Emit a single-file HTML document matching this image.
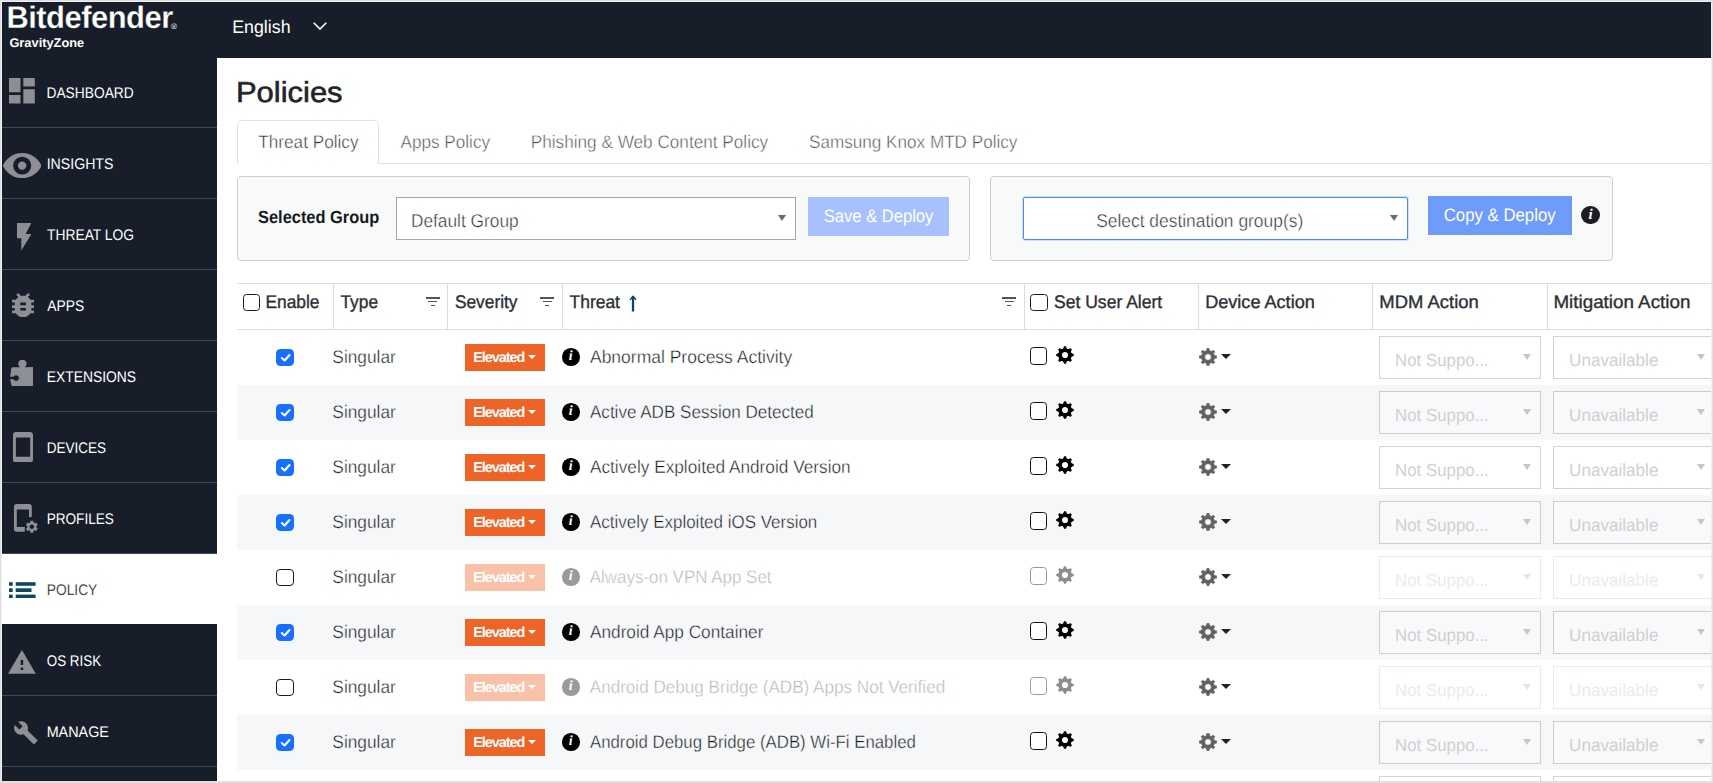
<!DOCTYPE html>
<html lang="en"><head><meta charset="utf-8"><title>Policies</title>
<style>
*{box-sizing:border-box;margin:0;padding:0}
html,body{width:1713px;height:783px;overflow:hidden;background:#fff}
body{font-family:"Liberation Sans",sans-serif;font-size:17.6px;color:#212529;position:relative;text-rendering:geometricPrecision}
.abs,.page *{position:absolute}
.page{position:absolute;left:0;top:0;width:1713px;height:783px;overflow:hidden}
.t{white-space:nowrap;display:inline-block;transform-origin:0 50%;line-height:20px}
/* frame */
.frame{position:absolute;left:0;top:0;width:1713px;height:783px;border:1px solid #e0e0e0;border-bottom-width:2px;pointer-events:none;box-shadow:inset 1px 1px 0 #efefef,inset -1px 0 0 #efefef}
/* header */
.hdr{left:2px;top:2px;width:1709px;height:56px;background:#171e2a}
.side{left:2px;top:58px;width:215px;height:723px;background:#171e2a}
.logo{left:6px;top:-1.1px;-webkit-text-stroke:0.3px #171e2a;color:#fff;font-size:31.4px;font-weight:700;line-height:34px;letter-spacing:-0.5px}
.reg{left:169px;top:19.5px;color:#fff;font-size:8px;line-height:10px}
.gz{left:8px;top:32.5px;color:#fff;font-size:12.6px;font-weight:700;line-height:16px}
.lang{left:231px;top:13.5px;color:#fff;font-size:18.2px;line-height:22px}
.chev{left:311px;top:20px;width:14px;height:8px}
/* sidebar */
.nav{left:0;width:215px;height:71px;border-bottom:1px solid #3b4b5f}
.nav .t{left:45px;top:27px;color:#fff;font-size:15.4px;line-height:20px}
.nav.act{background:#fff;border-bottom:0}
.nav.act .t{color:#4a4a4a}
.nav svg{fill:#8e8f94}
/* main */
.h1{left:236px;top:76.2px;font-size:28.9px;line-height:34px;color:#212529;-webkit-text-stroke:0.6px #212529}
.tabline{left:237px;top:163px;width:1474px;height:1px;background:#dee2e6}
.tab1{left:237px;top:120px;width:142px;height:44px;border:1px solid #dee2e6;border-bottom:0;border-radius:5px 5px 0 0;background:#fff}
.tabt{top:131.5px;font-size:18.2px;color:#4d5258;-webkit-text-stroke:0.45px #fff}
.panel{top:176px;height:85px;border:1px solid #cfcfcf;border-radius:4px;background:#f8f9f9}
.selbox{background:#fff;border:1px solid #a6a6a6}
.arr{width:0;height:0;border-left:4.5px solid transparent;border-right:4.5px solid transparent;border-top:6px solid #6b6b6b}
.btn{color:#fff;text-align:center}
/* table */
.thl{height:1px;background:#dcdcdc;left:237px;width:1474px}
.vsep{top:284px;width:1px;height:45px;background:#dcdcdc}
.th{top:291.600px;font-size:18.300px;font-weight:400;-webkit-text-stroke:0.35px #2b2f33;color:#2b2f33}
.hcb{width:17.5px;height:17.5px;margin:-0.5px 0 0 -0.7px;border:1.5px solid #1c1c1c;border-radius:3.5px;background:#fff}
.filt{width:14px;height:9px}
.filt i{left:0;height:1.5px;background:#555}
.row{left:237px;width:1474px;height:55px;overflow:hidden}
.row.alt{background:#f6f7f9}
.cb{left:39px;top:19px;width:18px;height:17.4px;border:1.5px solid #1c1c1c;border-radius:4px;background:#fff}
.cb.on{background:#1670fd;border:0;top:18.8px;height:17.2px;border-radius:4.5px}
.cb svg{left:0;top:0;width:18px;height:17.2px}
.sing{left:96px;top:16.6px;font-size:18.2px;color:#14181c;-webkit-text-stroke:0.4px #fff}
.badge{left:228px;top:14px;width:80px;height:27px;background:#ee6326}
.bt{left:8.3px;top:4.8px;font-size:14.4px;font-weight:700;color:#fff;line-height:18px;white-space:nowrap;letter-spacing:-1.03px;display:inline-block}
.car{left:63.4px;top:11px;width:0;height:0;border-left:4.3px solid transparent;border-right:4.3px solid transparent;border-top:4.3px solid #fff}
.info{left:325px;top:18.2px;width:17.6px;height:17.6px;border-radius:50%;background:#000}
.ii{left:0;top:0;width:17.6px;text-align:center;color:#fff;font-family:"Liberation Serif",serif;font-style:italic;font-weight:700;font-size:14px;line-height:17.6px}
.thr{left:353px;top:16.6px;font-size:18.2px;color:#14181c;-webkit-text-stroke:0.4px #fff}
.row.alt .sing,.row.alt .thr{-webkit-text-stroke-color:#f6f7f9}
.thin{-webkit-text-stroke:0.4px #fff}
.cb2{left:793px;top:17px;width:16.9px;height:17.7px;border:1.5px solid #111;border-radius:3.5px;background:#fff}
.g1{left:818.8px;top:15.9px;width:18px;height:18px;fill:#000;stroke:#000}
.g2{left:962px;top:17.8px;width:18px;height:18px;fill:#606060;stroke:#606060}
.car2{left:984px;top:23.5px;width:0;height:0;border-left:5px solid transparent;border-right:5px solid transparent;border-top:5px solid #222}
.sel{top:6px;height:43px;border:1px solid #d3d3d3;background:#fff}
.row.alt .sel{background:#f8f9fa;border-color:#cdcdcd}
.s1{left:1142px;width:162px}
.s2{left:1316px;width:170px}
.st{left:16px;top:12.7px;font-size:17.6px;line-height:20px;color:#d0d0d0;white-space:nowrap}
.sa{top:17px;width:0;height:0;border-left:4.5px solid transparent;border-right:4.5px solid transparent;border-top:6px solid #c6c6c6}
.s1 .sa{left:143px}
.s2 .sa{left:143px}
/* disabled rows */
.row.off .badge{background:#f8c1a8}
.row.off .info{background:#9a9a9a}
.row.off .thr{color:#b5b7ba}
.row.off .cb2{border-color:#9a9a9a}
.row.off .g1{fill:#8d8d8d;stroke:#8d8d8d}
.row.off .sel{border-color:#ebebeb}
.row.off .st{color:#ebebeb}
.row.off .sa{border-top-color:#e6e6e6}

</style></head>
<body>
<div class="page">
<div class="hdr">
  <span class="t logo" style="transform:translateX(-1.62px) scaleX(0.985)">Bitdefender</span><span class="t reg">&reg;</span>
  <span class="t gz" style="transform:translateX(-0.61px) scaleX(1.0186)">GravityZone</span>
  <span class="t lang" style="transform:translateX(-0.77px) scaleX(0.9772)">English</span>
  <svg class="chev" viewBox="0 0 14 8"><path d="M0.7 0.7L7 7L13.3 0.7" fill="none" stroke="#fff" stroke-width="1.6"/></svg>
</div>
<div class="side">
  <div class="nav" style="top:-1px"><svg style="left:7.2px;top:21.2px;width:25.8px;height:25.5px" viewBox="3 3 18 18" preserveAspectRatio="none"><path d="M3 13h8V3H3v10zm0 8h8v-6H3v6zm10 0h8V11h-8v10zm0-18v6h8V3h-8z"/></svg><span class="t" style="transform:translateX(-0.52px) scaleX(0.8953)">DASHBOARD</span></div>
  <div class="nav" style="top:70px"><svg style="left:0.9px;top:24.8px;width:38.3px;height:25.2px" viewBox="0 64 576 384" preserveAspectRatio="none"><path fill-rule="evenodd" d="M572.52 241.4C518.29 135.59 410.93 64 288 64S57.68 135.64 3.48 241.41a32.35 32.35 0 0 0 0 29.19C57.71 376.41 165.07 448 288 448s230.32-71.64 284.52-177.41a32.35 32.35 0 0 0 0-29.190zM288 392a136 136 0 1 1 0-272a136 136 0 1 1 0 272zM288 192a64 64 0 1 0 0 128a64 64 0 1 0 0-128z"/></svg><span class="t" style="transform:translateX(-0.35px) scaleX(0.9187)">INSIGHTS</span></div>
  <div class="nav" style="top:141px"><svg style="left:14.9px;top:24px;width:14.4px;height:27.6px" viewBox="7 2 10 20" preserveAspectRatio="none"><path d="M7 2v11h3v9l7-12h-4l4-8z"/></svg><span class="t" style="transform:translateX(0.08px) scaleX(0.8963)">THREAT LOG</span></div>
  <div class="nav" style="top:212px"><svg style="left:9.9px;top:22.8px;width:22.2px;height:24.4px" viewBox="4 3 16 18" preserveAspectRatio="none"><path d="M20 8h-2.810c-.45-.78-1.070-1.450-1.820-1.960L17 4.410 15.590 3l-2.170 2.170C12.960 5.060 12.490 5 12 5c-.49 0-.96.060-1.410.17L8.410 3 7 4.410l1.620 1.630C7.880 6.550 7.260 7.220 6.810 8H4v2h2.090c-.05.33-.09.66-.09 1v1H4v2h2v1c0 .34.040.67.090 1H4v2h2.810c1.040 1.790 2.970 3 5.190 3s4.150-1.210 5.190-3H20v-2h-2.090c.05-.33.090-.66.090-1v-1h2v-2h-2v-1c0-.34-.04-.67-.09-1H20V8zm-6 8h-4v-2h4v2zm0-4h-4v-2h4v2z"/></svg><span class="t" style="transform:translateX(0.3px) scaleX(0.8988)">APPS</span></div>
  <div class="nav" style="top:283px"><svg style="left:7.6px;top:19px;width:23.5px;height:26.4px" viewBox="0 0 23.5 26.4"><path d="M1.300 8.300Q1.400 7.300 2.500 7.250L10.100 7.150A4.150 4.150 0 1 1 14.700 7.150L22.900 7.100Q23.500 7.100 23.500 7.700V25.600Q23.500 26.400 22.700 26.400H3Q1.700 26.400 1.400 25.100L0.100 19.300H3.500A2.850 2.850 0 1 0 3.500 16.700H0.100Z"/></svg><span class="t" style="transform:translateX(-0.33px) scaleX(0.9008)">EXTENSIONS</span></div>
  <div class="nav" style="top:354px"><svg style="left:11px;top:20px;width:20px;height:30.4px" viewBox="5 1 14 22" preserveAspectRatio="none"><path d="M17 1.010L7 1c-1.100 0-2 .9-2 2v18c0 1.100.9 2 2 2h10c1.100 0 2-.9 2-2V3c0-1.100-.9-1.990-2-1.990zM17 19H7V5h10v14z"/></svg><span class="t" style="transform:translateX(-0.3px) scaleX(0.8776)">DEVICES</span></div>
  <div class="nav" style="top:425px"><svg style="left:12.2px;top:21.2px;width:26px;height:29px" viewBox="0 0 26 29"><path d="M2.600 0h12.600a2.600 2.600 0 0 1 2.600 2.600V13h-2.800V5.400H2.800V23h8v4.700H2.600A2.600 2.600 0 0 1 0 25.100V2.600A2.600 2.600 0 0 1 2.600 0z"/><g transform="translate(10.400 15.300) scale(0.62)"><path d="M19.140 12.940c.04-.3.060-.61.060-.94 0-.32-.02-.64-.07-.94l2.030-1.580a.49.490 0 0 0 .12-.61l-1.920-3.320a.488.488 0 0 0-.59-.22l-2.390.96c-.5-.38-1.030-.7-1.620-.94l-.36-2.540a.484.484 0 0 0-.48-.41h-3.840c-.24 0-.43.17-.47.41l-.36 2.540c-.59.24-1.130.57-1.620.94l-2.390-.96c-.22-.08-.47 0-.59.220L2.740 8.870c-.12.210-.08.470.12.610l2.030 1.580c-.05.3-.09.630-.09.940s.02.640.07.940l-2.030 1.580a.49.490 0 0 0-.12.610l1.920 3.320c.12.220.37.290.59.220l2.390-.96c.5.380 1.030.7 1.620.94l.36 2.540c.05.240.24.410.48.410h3.840c.24 0 .44-.17.47-.41l.36-2.540c.59-.24 1.130-.56 1.620-.94l2.390.96c.22.080.47 0 .59-.22l1.920-3.320c.12-.22.070-.47-.12-.61l-2.010-1.580zM12 15.600c-1.980 0-3.600-1.620-3.600-3.600s1.620-3.600 3.600-3.600 3.600 1.620 3.600 3.600-1.620 3.600-3.600 3.600z"/></g></svg><span class="t" style="transform:translateX(-0.3px) scaleX(0.8822)">PROFILES</span></div>
  <div class="nav act" style="top:496px;height:70px"><svg style="left:7.4px;top:27.700px;width:26.6px;height:16.4px;fill:#0a4862" viewBox="0 0 26.6 16.4"><rect x="0" y="0.200" width="3.700" height="3.600"/><rect x="6.700" y="0.200" width="19.900" height="3.600"/><rect x="0" y="6.300" width="3.700" height="3.700"/><rect x="6.700" y="6.300" width="15.800" height="3.700"/><rect x="0" y="12.600" width="3.700" height="3.600"/><rect x="6.700" y="12.600" width="19.900" height="3.600"/></svg><span class="t" style="transform:translateX(-0.22px) scaleX(0.895)">POLICY</span></div>
  <div class="nav" style="top:567px"><svg style="left:6.1px;top:25.200px;width:27.8px;height:23.8px" viewBox="1 2 22 19" preserveAspectRatio="none"><path d="M1 21h22L12 2 1 21zm12-3h-2v-2h2v2zm0-4h-2v-4h2v4z"/></svg><span class="t" style="transform:translateX(-0.25px) scaleX(0.8699)">OS RISK</span></div>
  <div class="nav" style="top:638px"><svg style="left:12.1px;top:24.800px;width:23.6px;height:23.2px" viewBox="0.900 0.900 22.100 22.200" preserveAspectRatio="none"><path d="M22.700 19l-9.100-9.100c.9-2.300.4-5-1.500-6.900-2-2-5-2.400-7.400-1.300L9 6 6 9 1.600 4.700C.4 7.100.9 10.100 2.900 12.100c1.900 1.900 4.600 2.400 6.900 1.500l9.100 9.100c.4.400 1 .4 1.400 0l2.300-2.300c.5-.4.5-1.100.1-1.400z"/></svg><span class="t" style="transform:translateX(-0.37px) scaleX(0.9338)">MANAGE</span></div>
  
</div>
<div class="main">
  <span class="t h1" style="transform:translateX(-0.04px) scaleX(1.0711)">Policies</span>
  <div class="tabline"></div>
  <div class="tab1"></div>
  <span class="t tabt" style="left:258px;color:#2e3338;transform:translateX(0.33px) scaleX(0.9435)">Threat Policy</span>
  <span class="t tabt" style="left:400px;transform:translateX(0.46px) scaleX(0.9429)">Apps Policy</span>
  <span class="t tabt" style="left:532px;transform:translateX(-1.25px) scaleX(0.9444)">Phishing &amp; Web Content Policy</span>
  <span class="t tabt" style="left:809px;transform:translateX(-0.04px) scaleX(0.9418)">Samsung Knox MTD Policy</span>

  <div class="panel" style="left:237px;width:733px"></div>
  <span class="t" style="left:257.500px;top:206.500px;font-weight:700;color:#16191c;font-size:17.6px;transform:translateX(0.03px) scaleX(0.9326)">Selected Group</span>
  <div class="selbox" style="left:396px;top:197px;width:400px;height:43px"></div>
  <span class="t thin" style="left:411.500px;top:210.700px;font-size:18.400px;color:#2d3136;transform:translateX(-1.05px) scaleX(0.9405)">Default Group</span>
  <i class="arr" style="left:777.500px;top:214.500px"></i>
  <div class="btn" style="left:808px;top:197px;width:141px;height:39px;background:#a6c1fc"></div>
  <span class="t" style="left:823.500px;top:206px;font-size:18px;color:#fff;transform:translateX(-0.19px) scaleX(0.9201)">Save &amp; Deploy</span>

  <div class="panel" style="left:990px;width:623px"></div>
  <div class="selbox" style="left:1022px;top:196px;width:387px;height:45px;border:2px solid #cfe0fb;border-radius:3px"></div>
  <div class="selbox" style="left:1023px;top:197px;width:385px;height:43px;border:1px solid #4d8bf0;border-radius:2px"></div>
  <span class="t thin" style="left:1097px;top:210.700px;font-size:18.400px;color:#2d3136;transform:translateX(-0.85px) scaleX(0.9464)">Select destination group(s)</span>
  <i class="arr" style="left:1389.500px;top:214.500px"></i>
  <div class="btn" style="left:1428px;top:196px;width:144px;height:39px;background:#6f9bfa"></div>
  <span class="t" style="left:1444px;top:205px;font-size:18px;color:#fff;transform:translateX(-0.3px) scaleX(0.9325)">Copy &amp; Deploy</span>
  <span class="info" style="left:1581.300px;top:205.800px;width:18.400px;height:18.400px;background:#1c1e22"><span class="ii" style="width:18.400px;line-height:18.400px;font-size:15px">i</span></span>

  <div class="thl" style="top:283px"></div>
  <div class="thl" style="top:329px"></div>
  <i class="vsep" style="left:333px"></i><i class="vsep" style="left:447px"></i><i class="vsep" style="left:562px"></i><i class="vsep" style="left:1024px"></i><i class="vsep" style="left:1198px"></i><i class="vsep" style="left:1372px"></i><i class="vsep" style="left:1547px"></i>
  <span class="hcb" style="left:243.500px;top:294px"></span>
  <span class="t th" style="left:265.500px;transform:translateX(-0.59px) scaleX(0.9491)">Enable</span>
  <span class="t th" style="left:340px;transform:translateX(0.46px) scaleX(0.9497)">Type</span>
  <span class="filt" style="left:425.500px;top:297px"><i style="top:0;width:14px"></i><i style="top:3.800px;left:2.500px;width:9px"></i><i style="top:7.600px;left:5px;width:4px"></i></span>
  <span class="t th" style="left:454.500px;transform:translateX(-0.07px) scaleX(0.9475)">Severity</span>
  <span class="filt" style="left:540px;top:297px"><i style="top:0;width:14px"></i><i style="top:3.800px;left:2.500px;width:9px"></i><i style="top:7.600px;left:5px;width:4px"></i></span>
  <span class="t th" style="left:569.500px;transform:translateX(-0.44px) scaleX(0.9536)">Threat</span>
  <svg style="left:628px;top:294px;width:10px;height:18px" viewBox="0 0 10 18"><path d="M5 2V17.500" fill="none" stroke="#0a4862" stroke-width="2.300"/><path d="M1.400 5.600L5 1.200L8.600 5.600L7.600 6.300L5 3.800L2.400 6.300Z" fill="#0a4862"/></svg>
  <span class="filt" style="left:1002px;top:297px"><i style="top:0;width:14px"></i><i style="top:3.800px;left:2.500px;width:9px"></i><i style="top:7.600px;left:5px;width:4px"></i></span>
  <span class="hcb" style="left:1031px;top:294px"></span>
  <span class="t th" style="left:1053.500px;transform:translateX(0.02px) scaleX(0.9591)">Set User Alert</span>
  <span class="t th" style="left:1205.500px;transform:translateX(-0.84px) scaleX(0.9899)">Device Action</span>
  <span class="t th" style="left:1379.500px;transform:translateX(-0.66px) scaleX(1.0088)">MDM Action</span>
  <span class="t th" style="left:1553.500px;transform:translateX(-0.59px) scaleX(1.029)">Mitigation Action</span>
<div class="rows">
<div class="row" style="top:330px"><span class="cb on"><svg viewBox="0 0 18 17.2"><path d="M5.800 9.000l2.800 2.500 4.900-5.500" fill="none" stroke="#fff" stroke-width="2.100" stroke-linecap="round" stroke-linejoin="round"/></svg></span><span class="t sing" style="transform:translateX(-0.65px) scaleX(0.9502)">Singular</span><span class="badge"><span class="bt">Elevated</span><i class="car"></i></span><span class="info"><span class="ii">i</span></span><span class="t thr" style="transform:translateX(-0.04px) scaleX(0.9616)">Abnormal Process Activity</span><span class="cb2"></span><svg class="g1" viewBox="-10 -10 20 20"><path fill-rule="evenodd" stroke-linejoin="round" stroke-width="1.2" d="M-1.66 -6.70L-0.58 -9.18L0.58 -9.18L1.66 -6.70L3.56 -5.91L6.08 -6.90L6.90 -6.08L5.91 -3.56L6.70 -1.66L9.18 -0.58L9.18 0.58L6.70 1.66L5.91 3.56L6.90 6.08L6.08 6.90L3.56 5.91L1.66 6.70L0.58 9.18L-0.58 9.18L-1.66 6.70L-3.56 5.91L-6.08 6.90L-6.90 6.08L-5.91 3.56L-6.70 1.66L-9.18 0.58L-9.18 -0.58L-6.70 -1.66L-5.91 -3.56L-6.90 -6.08L-6.08 -6.90L-3.56 -5.91ZM-4.00 0.00a4.0 4.0 0 1 0 8.0 0a4.0 4.0 0 1 0 -8.0 0Z"/></svg><svg class="g2" viewBox="-10 -10 20 20"><path fill-rule="evenodd" stroke-linejoin="round" stroke-width="0.8" d="M-1.42 -7.16L-1.26 -9.42L1.26 -9.42L1.42 -7.16L4.06 -6.07L5.76 -7.55L7.55 -5.76L6.07 -4.06L7.16 -1.42L9.42 -1.26L9.42 1.26L7.16 1.42L6.07 4.06L7.55 5.76L5.76 7.55L4.06 6.07L1.42 7.16L1.26 9.42L-1.26 9.42L-1.42 7.16L-4.06 6.07L-5.76 7.55L-7.55 5.76L-6.07 4.06L-7.16 1.42L-9.42 1.26L-9.42 -1.26L-7.16 -1.42L-6.07 -4.06L-7.55 -5.76L-5.76 -7.55L-4.06 -6.07ZM-3.70 0.00a3.7 3.7 0 1 0 7.4 0a3.7 3.7 0 1 0 -7.4 0Z"/></svg><i class="car2"></i><span class="sel s1"><span class="t st" style="transform:translateX(-0.94px) scaleX(0.9583)">Not Suppo...</span><i class="sa"></i></span><span class="sel s2"><span class="t st" style="transform:translateX(-0.96px) scaleX(0.9721)">Unavailable</span><i class="sa"></i></span></div>
<div class="row alt" style="top:385px"><span class="cb on"><svg viewBox="0 0 18 17.2"><path d="M5.800 9.000l2.800 2.500 4.900-5.500" fill="none" stroke="#fff" stroke-width="2.100" stroke-linecap="round" stroke-linejoin="round"/></svg></span><span class="t sing" style="transform:translateX(-0.65px) scaleX(0.9502)">Singular</span><span class="badge"><span class="bt">Elevated</span><i class="car"></i></span><span class="info"><span class="ii">i</span></span><span class="t thr" style="transform:translateX(-0.03px) scaleX(0.938)">Active ADB Session Detected</span><span class="cb2"></span><svg class="g1" viewBox="-10 -10 20 20"><path fill-rule="evenodd" stroke-linejoin="round" stroke-width="1.2" d="M-1.66 -6.70L-0.58 -9.18L0.58 -9.18L1.66 -6.70L3.56 -5.91L6.08 -6.90L6.90 -6.08L5.91 -3.56L6.70 -1.66L9.18 -0.58L9.18 0.58L6.70 1.66L5.91 3.56L6.90 6.08L6.08 6.90L3.56 5.91L1.66 6.70L0.58 9.18L-0.58 9.18L-1.66 6.70L-3.56 5.91L-6.08 6.90L-6.90 6.08L-5.91 3.56L-6.70 1.66L-9.18 0.58L-9.18 -0.58L-6.70 -1.66L-5.91 -3.56L-6.90 -6.08L-6.08 -6.90L-3.56 -5.91ZM-4.00 0.00a4.0 4.0 0 1 0 8.0 0a4.0 4.0 0 1 0 -8.0 0Z"/></svg><svg class="g2" viewBox="-10 -10 20 20"><path fill-rule="evenodd" stroke-linejoin="round" stroke-width="0.8" d="M-1.42 -7.16L-1.26 -9.42L1.26 -9.42L1.42 -7.16L4.06 -6.07L5.76 -7.55L7.55 -5.76L6.07 -4.06L7.16 -1.42L9.42 -1.26L9.42 1.26L7.16 1.42L6.07 4.06L7.55 5.76L5.76 7.55L4.06 6.07L1.42 7.16L1.26 9.42L-1.26 9.42L-1.42 7.16L-4.06 6.07L-5.76 7.55L-7.55 5.76L-6.07 4.06L-7.16 1.42L-9.42 1.26L-9.42 -1.26L-7.16 -1.42L-6.07 -4.06L-7.55 -5.76L-5.76 -7.55L-4.06 -6.07ZM-3.70 0.00a3.7 3.7 0 1 0 7.4 0a3.7 3.7 0 1 0 -7.4 0Z"/></svg><i class="car2"></i><span class="sel s1"><span class="t st" style="transform:translateX(-0.94px) scaleX(0.9583)">Not Suppo...</span><i class="sa"></i></span><span class="sel s2"><span class="t st" style="transform:translateX(-0.96px) scaleX(0.9721)">Unavailable</span><i class="sa"></i></span></div>
<div class="row" style="top:440px"><span class="cb on"><svg viewBox="0 0 18 17.2"><path d="M5.800 9.000l2.800 2.500 4.900-5.500" fill="none" stroke="#fff" stroke-width="2.100" stroke-linecap="round" stroke-linejoin="round"/></svg></span><span class="t sing" style="transform:translateX(-0.65px) scaleX(0.9502)">Singular</span><span class="badge"><span class="bt">Elevated</span><i class="car"></i></span><span class="info"><span class="ii">i</span></span><span class="t thr" style="transform:translateX(-0.04px) scaleX(0.9481)">Actively Exploited Android Version</span><span class="cb2"></span><svg class="g1" viewBox="-10 -10 20 20"><path fill-rule="evenodd" stroke-linejoin="round" stroke-width="1.2" d="M-1.66 -6.70L-0.58 -9.18L0.58 -9.18L1.66 -6.70L3.56 -5.91L6.08 -6.90L6.90 -6.08L5.91 -3.56L6.70 -1.66L9.18 -0.58L9.18 0.58L6.70 1.66L5.91 3.56L6.90 6.08L6.08 6.90L3.56 5.91L1.66 6.70L0.58 9.18L-0.58 9.18L-1.66 6.70L-3.56 5.91L-6.08 6.90L-6.90 6.08L-5.91 3.56L-6.70 1.66L-9.18 0.58L-9.18 -0.58L-6.70 -1.66L-5.91 -3.56L-6.90 -6.08L-6.08 -6.90L-3.56 -5.91ZM-4.00 0.00a4.0 4.0 0 1 0 8.0 0a4.0 4.0 0 1 0 -8.0 0Z"/></svg><svg class="g2" viewBox="-10 -10 20 20"><path fill-rule="evenodd" stroke-linejoin="round" stroke-width="0.8" d="M-1.42 -7.16L-1.26 -9.42L1.26 -9.42L1.42 -7.16L4.06 -6.07L5.76 -7.55L7.55 -5.76L6.07 -4.06L7.16 -1.42L9.42 -1.26L9.42 1.26L7.16 1.42L6.07 4.06L7.55 5.76L5.76 7.55L4.06 6.07L1.42 7.16L1.26 9.42L-1.26 9.42L-1.42 7.16L-4.06 6.07L-5.76 7.55L-7.55 5.76L-6.07 4.06L-7.16 1.42L-9.42 1.26L-9.42 -1.26L-7.16 -1.42L-6.07 -4.06L-7.55 -5.76L-5.76 -7.55L-4.06 -6.07ZM-3.70 0.00a3.7 3.7 0 1 0 7.4 0a3.7 3.7 0 1 0 -7.4 0Z"/></svg><i class="car2"></i><span class="sel s1"><span class="t st" style="transform:translateX(-0.94px) scaleX(0.9583)">Not Suppo...</span><i class="sa"></i></span><span class="sel s2"><span class="t st" style="transform:translateX(-0.96px) scaleX(0.9721)">Unavailable</span><i class="sa"></i></span></div>
<div class="row alt" style="top:495px"><span class="cb on"><svg viewBox="0 0 18 17.2"><path d="M5.800 9.000l2.800 2.500 4.900-5.500" fill="none" stroke="#fff" stroke-width="2.100" stroke-linecap="round" stroke-linejoin="round"/></svg></span><span class="t sing" style="transform:translateX(-0.65px) scaleX(0.9502)">Singular</span><span class="badge"><span class="bt">Elevated</span><i class="car"></i></span><span class="info"><span class="ii">i</span></span><span class="t thr" style="transform:translateX(-0.03px) scaleX(0.9331)">Actively Exploited iOS Version</span><span class="cb2"></span><svg class="g1" viewBox="-10 -10 20 20"><path fill-rule="evenodd" stroke-linejoin="round" stroke-width="1.2" d="M-1.66 -6.70L-0.58 -9.18L0.58 -9.18L1.66 -6.70L3.56 -5.91L6.08 -6.90L6.90 -6.08L5.91 -3.56L6.70 -1.66L9.18 -0.58L9.18 0.58L6.70 1.66L5.91 3.56L6.90 6.08L6.08 6.90L3.56 5.91L1.66 6.70L0.58 9.18L-0.58 9.18L-1.66 6.70L-3.56 5.91L-6.08 6.90L-6.90 6.08L-5.91 3.56L-6.70 1.66L-9.18 0.58L-9.18 -0.58L-6.70 -1.66L-5.91 -3.56L-6.90 -6.08L-6.08 -6.90L-3.56 -5.91ZM-4.00 0.00a4.0 4.0 0 1 0 8.0 0a4.0 4.0 0 1 0 -8.0 0Z"/></svg><svg class="g2" viewBox="-10 -10 20 20"><path fill-rule="evenodd" stroke-linejoin="round" stroke-width="0.8" d="M-1.42 -7.16L-1.26 -9.42L1.26 -9.42L1.42 -7.16L4.06 -6.07L5.76 -7.55L7.55 -5.76L6.07 -4.06L7.16 -1.42L9.42 -1.26L9.42 1.26L7.16 1.42L6.07 4.06L7.55 5.76L5.76 7.55L4.06 6.07L1.42 7.16L1.26 9.42L-1.26 9.42L-1.42 7.16L-4.06 6.07L-5.76 7.55L-7.55 5.76L-6.07 4.06L-7.16 1.42L-9.42 1.26L-9.42 -1.26L-7.16 -1.42L-6.07 -4.06L-7.55 -5.76L-5.76 -7.55L-4.06 -6.07ZM-3.70 0.00a3.7 3.7 0 1 0 7.4 0a3.7 3.7 0 1 0 -7.4 0Z"/></svg><i class="car2"></i><span class="sel s1"><span class="t st" style="transform:translateX(-0.94px) scaleX(0.9583)">Not Suppo...</span><i class="sa"></i></span><span class="sel s2"><span class="t st" style="transform:translateX(-0.96px) scaleX(0.9721)">Unavailable</span><i class="sa"></i></span></div>
<div class="row off" style="top:550px"><span class="cb "></span><span class="t sing" style="transform:translateX(-0.65px) scaleX(0.9502)">Singular</span><span class="badge"><span class="bt">Elevated</span><i class="car"></i></span><span class="info"><span class="ii">i</span></span><span class="t thr" style="transform:translateX(-0.27px) scaleX(0.9318)">Always-on VPN App Set</span><span class="cb2"></span><svg class="g1" viewBox="-10 -10 20 20"><path fill-rule="evenodd" stroke-linejoin="round" stroke-width="1.2" d="M-1.66 -6.70L-0.58 -9.18L0.58 -9.18L1.66 -6.70L3.56 -5.91L6.08 -6.90L6.90 -6.08L5.91 -3.56L6.70 -1.66L9.18 -0.58L9.18 0.58L6.70 1.66L5.91 3.56L6.90 6.08L6.08 6.90L3.56 5.91L1.66 6.70L0.58 9.18L-0.58 9.18L-1.66 6.70L-3.56 5.91L-6.08 6.90L-6.90 6.08L-5.91 3.56L-6.70 1.66L-9.18 0.58L-9.18 -0.58L-6.70 -1.66L-5.91 -3.56L-6.90 -6.08L-6.08 -6.90L-3.56 -5.91ZM-4.00 0.00a4.0 4.0 0 1 0 8.0 0a4.0 4.0 0 1 0 -8.0 0Z"/></svg><svg class="g2" viewBox="-10 -10 20 20"><path fill-rule="evenodd" stroke-linejoin="round" stroke-width="0.8" d="M-1.42 -7.16L-1.26 -9.42L1.26 -9.42L1.42 -7.16L4.06 -6.07L5.76 -7.55L7.55 -5.76L6.07 -4.06L7.16 -1.42L9.42 -1.26L9.42 1.26L7.16 1.42L6.07 4.06L7.55 5.76L5.76 7.55L4.06 6.07L1.42 7.16L1.26 9.42L-1.26 9.42L-1.42 7.16L-4.06 6.07L-5.76 7.55L-7.55 5.76L-6.07 4.06L-7.16 1.42L-9.42 1.26L-9.42 -1.26L-7.16 -1.42L-6.07 -4.06L-7.55 -5.76L-5.76 -7.55L-4.06 -6.07ZM-3.70 0.00a3.7 3.7 0 1 0 7.4 0a3.7 3.7 0 1 0 -7.4 0Z"/></svg><i class="car2"></i><span class="sel s1"><span class="t st" style="transform:translateX(-0.94px) scaleX(0.9583)">Not Suppo...</span><i class="sa"></i></span><span class="sel s2"><span class="t st" style="transform:translateX(-0.96px) scaleX(0.9721)">Unavailable</span><i class="sa"></i></span></div>
<div class="row alt" style="top:605px"><span class="cb on"><svg viewBox="0 0 18 17.2"><path d="M5.800 9.000l2.800 2.500 4.900-5.500" fill="none" stroke="#fff" stroke-width="2.100" stroke-linecap="round" stroke-linejoin="round"/></svg></span><span class="t sing" style="transform:translateX(-0.65px) scaleX(0.9502)">Singular</span><span class="badge"><span class="bt">Elevated</span><i class="car"></i></span><span class="info"><span class="ii">i</span></span><span class="t thr" style="transform:translateX(-0.04px) scaleX(0.9476)">Android App Container</span><span class="cb2"></span><svg class="g1" viewBox="-10 -10 20 20"><path fill-rule="evenodd" stroke-linejoin="round" stroke-width="1.2" d="M-1.66 -6.70L-0.58 -9.18L0.58 -9.18L1.66 -6.70L3.56 -5.91L6.08 -6.90L6.90 -6.08L5.91 -3.56L6.70 -1.66L9.18 -0.58L9.18 0.58L6.70 1.66L5.91 3.56L6.90 6.08L6.08 6.90L3.56 5.91L1.66 6.70L0.58 9.18L-0.58 9.18L-1.66 6.70L-3.56 5.91L-6.08 6.90L-6.90 6.08L-5.91 3.56L-6.70 1.66L-9.18 0.58L-9.18 -0.58L-6.70 -1.66L-5.91 -3.56L-6.90 -6.08L-6.08 -6.90L-3.56 -5.91ZM-4.00 0.00a4.0 4.0 0 1 0 8.0 0a4.0 4.0 0 1 0 -8.0 0Z"/></svg><svg class="g2" viewBox="-10 -10 20 20"><path fill-rule="evenodd" stroke-linejoin="round" stroke-width="0.8" d="M-1.42 -7.16L-1.26 -9.42L1.26 -9.42L1.42 -7.16L4.06 -6.07L5.76 -7.55L7.55 -5.76L6.07 -4.06L7.16 -1.42L9.42 -1.26L9.42 1.26L7.16 1.42L6.07 4.06L7.55 5.76L5.76 7.55L4.06 6.07L1.42 7.16L1.26 9.42L-1.26 9.42L-1.42 7.16L-4.06 6.07L-5.76 7.55L-7.55 5.76L-6.07 4.06L-7.16 1.42L-9.42 1.26L-9.42 -1.26L-7.16 -1.42L-6.07 -4.06L-7.55 -5.76L-5.76 -7.55L-4.06 -6.07ZM-3.70 0.00a3.7 3.7 0 1 0 7.4 0a3.7 3.7 0 1 0 -7.4 0Z"/></svg><i class="car2"></i><span class="sel s1"><span class="t st" style="transform:translateX(-0.94px) scaleX(0.9583)">Not Suppo...</span><i class="sa"></i></span><span class="sel s2"><span class="t st" style="transform:translateX(-0.96px) scaleX(0.9721)">Unavailable</span><i class="sa"></i></span></div>
<div class="row off" style="top:660px"><span class="cb "></span><span class="t sing" style="transform:translateX(-0.65px) scaleX(0.9502)">Singular</span><span class="badge"><span class="bt">Elevated</span><i class="car"></i></span><span class="info"><span class="ii">i</span></span><span class="t thr" style="transform:translateX(-0.27px) scaleX(0.9401)">Android Debug Bridge (ADB) Apps Not Verified</span><span class="cb2"></span><svg class="g1" viewBox="-10 -10 20 20"><path fill-rule="evenodd" stroke-linejoin="round" stroke-width="1.2" d="M-1.66 -6.70L-0.58 -9.18L0.58 -9.18L1.66 -6.70L3.56 -5.91L6.08 -6.90L6.90 -6.08L5.91 -3.56L6.70 -1.66L9.18 -0.58L9.18 0.58L6.70 1.66L5.91 3.56L6.90 6.08L6.08 6.90L3.56 5.91L1.66 6.70L0.58 9.18L-0.58 9.18L-1.66 6.70L-3.56 5.91L-6.08 6.90L-6.90 6.08L-5.91 3.56L-6.70 1.66L-9.18 0.58L-9.18 -0.58L-6.70 -1.66L-5.91 -3.56L-6.90 -6.08L-6.08 -6.90L-3.56 -5.91ZM-4.00 0.00a4.0 4.0 0 1 0 8.0 0a4.0 4.0 0 1 0 -8.0 0Z"/></svg><svg class="g2" viewBox="-10 -10 20 20"><path fill-rule="evenodd" stroke-linejoin="round" stroke-width="0.8" d="M-1.42 -7.16L-1.26 -9.42L1.26 -9.42L1.42 -7.16L4.06 -6.07L5.76 -7.55L7.55 -5.76L6.07 -4.06L7.16 -1.42L9.42 -1.26L9.42 1.26L7.16 1.42L6.07 4.06L7.55 5.76L5.76 7.55L4.06 6.07L1.42 7.16L1.26 9.42L-1.26 9.42L-1.42 7.16L-4.06 6.07L-5.76 7.55L-7.55 5.76L-6.07 4.06L-7.16 1.42L-9.42 1.26L-9.42 -1.26L-7.16 -1.42L-6.07 -4.06L-7.55 -5.76L-5.76 -7.55L-4.06 -6.07ZM-3.70 0.00a3.7 3.7 0 1 0 7.4 0a3.7 3.7 0 1 0 -7.4 0Z"/></svg><i class="car2"></i><span class="sel s1"><span class="t st" style="transform:translateX(-0.94px) scaleX(0.9583)">Not Suppo...</span><i class="sa"></i></span><span class="sel s2"><span class="t st" style="transform:translateX(-0.96px) scaleX(0.9721)">Unavailable</span><i class="sa"></i></span></div>
<div class="row alt" style="top:715px"><span class="cb on"><svg viewBox="0 0 18 17.2"><path d="M5.800 9.000l2.800 2.500 4.900-5.500" fill="none" stroke="#fff" stroke-width="2.100" stroke-linecap="round" stroke-linejoin="round"/></svg></span><span class="t sing" style="transform:translateX(-0.65px) scaleX(0.9502)">Singular</span><span class="badge"><span class="bt">Elevated</span><i class="car"></i></span><span class="info"><span class="ii">i</span></span><span class="t thr" style="transform:translateX(-0.03px) scaleX(0.9238)">Android Debug Bridge (ADB) Wi-Fi Enabled</span><span class="cb2"></span><svg class="g1" viewBox="-10 -10 20 20"><path fill-rule="evenodd" stroke-linejoin="round" stroke-width="1.2" d="M-1.66 -6.70L-0.58 -9.18L0.58 -9.18L1.66 -6.70L3.56 -5.91L6.08 -6.90L6.90 -6.08L5.91 -3.56L6.70 -1.66L9.18 -0.58L9.18 0.58L6.70 1.66L5.91 3.56L6.90 6.08L6.08 6.90L3.56 5.91L1.66 6.70L0.58 9.18L-0.58 9.18L-1.66 6.70L-3.56 5.91L-6.08 6.90L-6.90 6.08L-5.91 3.56L-6.70 1.66L-9.18 0.58L-9.18 -0.58L-6.70 -1.66L-5.91 -3.56L-6.90 -6.08L-6.08 -6.90L-3.56 -5.91ZM-4.00 0.00a4.0 4.0 0 1 0 8.0 0a4.0 4.0 0 1 0 -8.0 0Z"/></svg><svg class="g2" viewBox="-10 -10 20 20"><path fill-rule="evenodd" stroke-linejoin="round" stroke-width="0.8" d="M-1.42 -7.16L-1.26 -9.42L1.26 -9.42L1.42 -7.16L4.06 -6.07L5.76 -7.55L7.55 -5.76L6.07 -4.06L7.16 -1.42L9.42 -1.26L9.42 1.26L7.16 1.42L6.07 4.06L7.55 5.76L5.76 7.55L4.06 6.07L1.42 7.16L1.26 9.42L-1.26 9.42L-1.42 7.16L-4.06 6.07L-5.76 7.55L-7.55 5.76L-6.07 4.06L-7.16 1.42L-9.42 1.26L-9.42 -1.26L-7.16 -1.42L-6.07 -4.06L-7.55 -5.76L-5.76 -7.55L-4.06 -6.07ZM-3.70 0.00a3.7 3.7 0 1 0 7.4 0a3.7 3.7 0 1 0 -7.4 0Z"/></svg><i class="car2"></i><span class="sel s1"><span class="t st" style="transform:translateX(-0.94px) scaleX(0.9583)">Not Suppo...</span><i class="sa"></i></span><span class="sel s2"><span class="t st" style="transform:translateX(-0.96px) scaleX(0.9721)">Unavailable</span><i class="sa"></i></span></div>
<div class="row" style="top:770px;height:11px"><span class="sel s1"></span><span class="sel s2"></span></div>
</div>
</div>
<div class="frame"></div>
</body></html>
